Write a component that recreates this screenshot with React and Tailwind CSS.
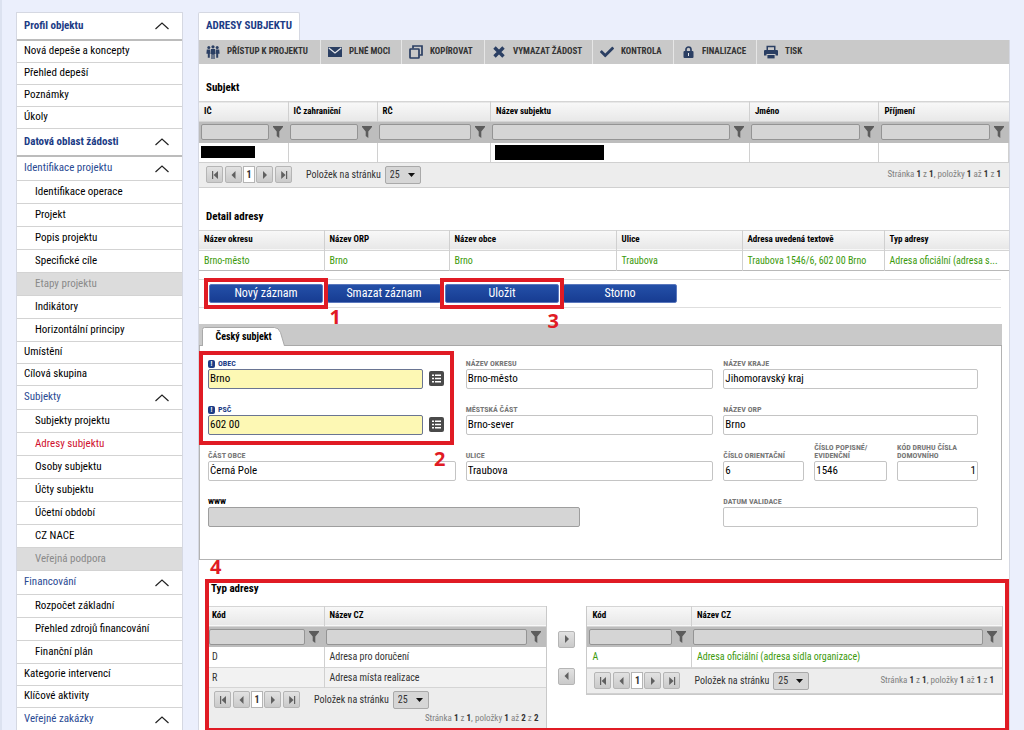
import { FaCheck } from "react-icons/fa";

const menu = [
    {
        title: "Profil objektu",
        items: ["Nová depeše a koncepty", "Přehled depeší", "Poznámky", "Úkoly"],
    },
    {
        title: "Datová oblast žádosti",
        groups: [
            {
                title: "Identifikace projektu",
                items: ["Identifikace operace", "Projekt", "Popis projektu", "Specifické cíle", "Etapy projektu", "Indikátory", "Horizontální principy"],
                after: ["Umístění", "Cílová skupina"],
            },
            {
                title: "Subjekty",
                items: ["Subjekty projektu", "Adresy subjektu", "Osoby subjektu", "Účty subjektu", "Účetní období", "CZ NACE", "Veřejná podpora"],
            },
            {
                title: "Financování",
                items: ["Rozpočet základní", "Přehled zdrojů financování", "Finanční plán"],
                after: ["Kategorie intervencí", "Klíčové aktivity"],
            },
            { title: "Veřejné zakázky", items: [] },
        ],
    },
];

const disabledItems = ["Etapy projektu", "Veřejná podpora"];
const activeItem = "Adresy subjektu";

/* Icons */
function Chevron() {
    return (
        <svg className="w-[14px] h-2" viewBox="0 0 14 8" fill="none" stroke="#222" strokeWidth="1.2">
            <path d="M0.5 7 L7 1 L13.5 7" />
        </svg>
    );
}

function People() {
    return (
        <svg className="w-[14px] h-[14px]" viewBox="0 0 14 14" fill="#2b3f63">
            <circle cx="2.8" cy="2.6" r="1.5" />
            <circle cx="11.2" cy="2.6" r="1.5" />
            <circle cx="7" cy="1.8" r="1.6" />
            <path d="M0.8 4.6h3.4v4.2h-0.4v4h-2v-4H0.4z" />
            <path d="M9.8 4.6h3.4l0.4 4.2h-1.4v4h-2v-4h-0.4z" />
            <path d="M5 4h4l0.5 5h-0.9v5h-1.2v-4.4h-0.8V14H5.4V9h-0.9z" />
        </svg>
    );
}

function Envelope() {
    return (
        <svg className="w-[14px] h-[10px]" viewBox="0 0 14 10">
            <rect width="14" height="10" rx="0.6" fill="#2b3f63" />
            <path d="M0.8 1 L7 6 L13.2 1" fill="none" stroke="#e4e6ea" strokeWidth="1.2" />
        </svg>
    );
}

function Copy() {
    return (
        <svg className="w-[14px] h-[14px]" viewBox="0 0 14 14" fill="none" stroke="#2b3f63" strokeWidth="1.7">
            <rect x="1" y="4" width="9" height="9" rx="0.5" />
            <path d="M4 3.5V1h9v9h-2.5" />
        </svg>
    );
}

function Cross() {
    return (
        <svg className="w-3 h-3" viewBox="0 0 12 12" fill="none" stroke="#2b3f63" strokeWidth="3.4">
            <path d="M1.5 1.5l9 9M10.5 1.5l-9 9" />
        </svg>
    );
}

function Lock() {
    return (
        <svg className="w-[11px] h-3" viewBox="0 0 11 12">
            <path d="M3 6V3.5a2.5 2.5 0 0 1 5 0V6" fill="none" stroke="#2b3f63" strokeWidth="1.7" />
            <rect x="0.5" y="5" width="10" height="7" rx="1" fill="#2b3f63" />
            <path d="M5 7h1v3H5z" fill="#e4e6ea" />
        </svg>
    );
}

function Printer() {
    return (
        <svg className="w-[14px] h-[14px]" viewBox="0 0 14 14" fill="#2b3f63">
            <path d="M2.5 0.8h9V5H10V2.2H4V5H2.5z" />
            <path d="M1 5h12q1 0 1 1v4.5h-2.5V9h-9v1.5H0V6q0-1 1-1z" />
            <path d="M3.4 10h7.2v3.4H3.4z" />
        </svg>
    );
}

function Funnel() {
    return (
        <svg className="w-[10px] h-3 shrink-0" viewBox="0 0 10 12" fill="#5c5c5c">
            <path d="M0 0h10v1L6.3 5.5V12L3.7 10V5.5L0 1z" />
        </svg>
    );
}

const pagerIcons = {
    first: "M2 1v8h1.2V1zM8 1v8L3.6 5z",
    prev: "M6.5 1v8L2.5 5z",
    next: "M3 1v8l4-4z",
    last: "M7 1v8h1.2V1zM2.2 1v8L6.6 5z",
};

function PagerButton({ icon, label }) {
    return (
        <button aria-label={label} className="flex h-[17px] w-[17px] items-center justify-center rounded-xs border border-[#b5b5b5] bg-linear-to-b from-[#e2e2e2] to-[#cacaca]">
            <svg className="w-[10px] h-[10px]" viewBox="0 0 10 10" fill="#606060">
                <path d={pagerIcons[icon]} />
            </svg>
        </button>
    );
}

/* Sidebar */
function Leaf({ text, nested }) {
    let look = "text-black";
    if (disabledItems.includes(text)) look = "bg-[#dcdcdc] text-[#8a8a8a]";
    if (text === activeItem) look = "text-[#d0102e]";
    return (
        <li>
            <a href="#" className={`flex items-center border-b border-[#d3d3d3] ${nested ? "h-[23px] pl-[18px]" : "h-[22px] pl-[7px]"} ${look}`}>
                {text}
            </a>
        </li>
    );
}

function Sidebar() {
    return (
        <nav className="w-[167px] shrink-0 border-x border-t border-[#d5d8e2] bg-white text-[11px]">
            {menu.map((part) => (
                <section key={part.title}>
                    <button className="flex h-7 w-full items-center justify-between border-b-2 border-[#bcbcbc] pl-[7px] pr-[13px] font-bold text-[#1c3c86]">
                        {part.title}
                        <Chevron />
                    </button>
                    {part.items && <ul>{part.items.map((t) => <Leaf key={t} text={t} />)}</ul>}
                    {part.groups?.map((g) => (
                        <div key={g.title}>
                            <button className="flex h-6 w-full items-center justify-between border-b border-[#d3d3d3] pl-[7px] pr-[13px] text-[#2a4a93]">
                                {g.title}
                                <Chevron />
                            </button>
                            <ul>
                                {g.items.map((t) => <Leaf key={t} text={t} nested />)}
                                {g.after?.map((t) => <Leaf key={t} text={t} />)}
                            </ul>
                        </div>
                    ))}
                </section>
            ))}
        </nav>
    );
}

/* Toolbar */
const tools = [
    { label: "PŘÍSTUP K PROJEKTU", icon: <People />, width: "w-[122px]" },
    { label: "PLNÉ MOCI", icon: <Envelope />, width: "w-[81px]" },
    { label: "KOPÍROVAT", icon: <Copy />, width: "w-[83px]" },
    { label: "VYMAZAT ŽÁDOST", icon: <Cross />, width: "w-[108px]" },
    { label: "KONTROLA", icon: <FaCheck size={14} />, width: "w-[81px]" },
    { label: "FINALIZACE", icon: <Lock />, width: "w-[83px]" },
    { label: "TISK", icon: <Printer />, width: "w-[70px]" },
];

function Toolbar() {
    return (
        <div className="flex h-6 bg-[#c9c9c9]">
            {tools.map((tool) => (
                <button
                    key={tool.label}
                    className={`flex items-center gap-[7px] border-r border-[#e6e6e6] pl-[7px] text-[9px] font-bold whitespace-nowrap text-[#333] last:border-r-0 ${tool.width}`}
                >
                    <span className="flex w-[14px] justify-center text-[#2b3f63]">{tool.icon}</span>
                    {tool.label}
                </button>
            ))}
        </div>
    );
}

/* Tables */
function HeadRow({ columns }) {
    return (
        <tr className="h-5 border-y border-[#d5d5d5] bg-linear-to-b from-[#f8f8f8] to-[#e8e8e8]">
            {columns.map((c) => (
                <th key={c} className="border-r border-[#d0d0d0] px-[5px] text-left text-[9px] font-bold text-black last:border-r-0">
                    {c}
                </th>
            ))}
        </tr>
    );
}

function FilterRow({ columns }) {
    return (
        <tr className="h-[21px] bg-[#bdbdbd]">
            {columns.map((c) => (
                <td key={c} className="py-0 pr-[5px] pl-0.5">
                    <div className="flex items-center gap-1">
                        <input aria-label={`Filtr ${c}`} className="h-4 w-full min-w-0 rounded-xs border border-[#949494] bg-[#d5d5d5]" />
                        <Funnel />
                    </div>
                </td>
            ))}
        </tr>
    );
}

function Pager({ id, from, total, wrap }) {
    return (
        <div className={`flex items-center border-[#d0d0d0] bg-[#ededed] pl-[7px] pr-2 text-[10px] text-[#333] ${wrap ? "flex-wrap" : "h-[26px] border-y"}`}>
            <div className="flex items-center gap-0.5">
                <PagerButton icon="first" label="První stránka" />
                <PagerButton icon="prev" label="Předchozí stránka" />
                <span className="-mx-px flex h-[17px] w-3 items-center justify-center border border-[#b5b5b5] bg-white font-bold">1</span>
                <PagerButton icon="next" label="Další stránka" />
                <PagerButton icon="last" label="Poslední stránka" />
            </div>
            <label htmlFor={id} className="pr-1 pl-[14px]">Položek na stránku</label>
            <div className="relative my-[3px]">
                <select id={id} className="block h-[18px] w-9 appearance-none rounded-xs border border-[#a9a9a9] bg-[#d6d6d6] pl-1 text-[10px]">
                    <option>25</option>
                </select>
                <svg className="pointer-events-none absolute top-[7px] right-1.5 h-1 w-[7px]" viewBox="0 0 7 4" fill="#111">
                    <path d="M0 0h7L3.5 4z" />
                </svg>
            </div>
            <p className={`text-right text-[9px] text-[#808080] [&_b]:text-[#333] ${wrap ? "w-full pb-[7px] leading-3" : "ml-auto"}`}>
                Stránka <b>1</b> z <b>1</b>, položky <b>{from}</b> až <b>{total}</b> z <b>{total}</b>
            </p>
        </div>
    );
}

function Note({ children, className }) {
    return <span className={`pointer-events-none absolute font-['Open_Sans',sans-serif] text-[20px] leading-5 font-bold text-[#e01b24] ${className}`}>{children}</span>;
}

function SubjectTable() {
    const columns = ["IČ", "IČ zahraniční", "RČ", "Název subjektu", "Jméno", "Příjmení"];
    return (
        <section>
            <h2 className="px-[7px] pt-4 pb-[5px] text-[11px] leading-4 font-bold text-black">Subjekt</h2>
            <table className="w-full table-fixed border-collapse">
                <colgroup>
                    <col className="w-[11%]" />
                    <col className="w-[11%]" />
                    <col className="w-[14%]" />
                    <col className="w-[32%]" />
                    <col className="w-[16%]" />
                    <col className="w-[16%]" />
                </colgroup>
                <thead>
                    <HeadRow columns={columns} />
                    <FilterRow columns={columns} />
                </thead>
                <tbody>
                    <tr className="h-[19px] [&>td]:border-r [&>td]:border-[#d0d0d0]">
                        <td className="px-0.5"><div className="h-3 w-[54px] bg-black" /></td>
                        <td />
                        <td />
                        <td className="px-1"><div className="h-[15px] w-[109px] bg-black" /></td>
                        <td />
                        <td />
                    </tr>
                </tbody>
            </table>
            <Pager id="size-subject" from={1} total={1} />
        </section>
    );
}

function AddressTable() {
    const columns = ["Název okresu", "Název ORP", "Název obce", "Ulice", "Adresa uvedená textově", "Typ adresy"];
    const row = ["Brno-město", "Brno", "Brno", "Traubova", "Traubova 1546/6, 602 00 Brno", "Adresa oficiální (adresa s..."];
    return (
        <section>
            <h2 className="px-[7px] pt-[21px] pb-[5px] text-[11px] leading-4 font-bold text-black">Detail adresy</h2>
            <table className="w-full table-fixed border-collapse border-b border-[#b9b9b9]">
                <colgroup>
                    <col className="w-[125px]" />
                    <col className="w-[125px]" />
                    <col className="w-[167px]" />
                    <col className="w-[126px]" />
                    <col className="w-[142px]" />
                    <col />
                </colgroup>
                <thead>
                    <HeadRow columns={columns} />
                </thead>
                <tbody>
                    <tr className="h-5">
                        {row.map((cell, i) => (
                            <td key={i} className="truncate border-r border-[#d0d0d0] px-[5px] text-[10px] text-[#3c9a0c] last:border-r-0">{cell}</td>
                        ))}
                    </tr>
                </tbody>
            </table>
        </section>
    );
}

/* Buttons */
function Actions() {
    const actions = [
        { label: "Nový záznam", note: "1", at: "-bottom-6 -right-[18px]" },
        { label: "Smazat záznam" },
        { label: "Uložit", note: "3", at: "-bottom-7 right-0" },
        { label: "Storno" },
    ];
    return (
        <div className="mr-2 mt-2 flex gap-1 border-y border-[#dedede] py-1 pl-[10px]">
            {actions.map((a) => (
                <div key={a.label} className="relative">
                    <button className="block h-[19px] w-[114px] rounded-xs border border-[#5b78bd] bg-linear-to-b from-[#2450a8] to-[#173c92] text-[12px] leading-4 text-white">
                        {a.label}
                    </button>
                    {a.note && (
                        <>
                            <div className="pointer-events-none absolute -inset-x-[5px] -inset-y-[6px] z-10 border-4 border-[#e01b24]" />
                            <Note className={a.at}>{a.note}</Note>
                        </>
                    )}
                </div>
            ))}
        </div>
    );
}

/* Form */
function Field({ id, label, value, required, locked, right, className = "" }) {
    let box = "border-[#c4c4c4] bg-white";
    if (required) box = "border-[#6a7592] bg-[#fdf8b4]";
    if (locked) box = "border-[#9e9e9e] bg-[#d5d5d5]";
    let tone = "text-[#777]";
    if (required) tone = "text-[#1c3c86]";
    if (locked) tone = "text-black";
    return (
        <div className={`flex h-[46px] flex-col justify-end pb-[10px] ${className}`}>
            <label htmlFor={id} className={`flex items-center gap-[3px] text-[8px] leading-[8px] font-bold ${tone}`}>
                {required && <span className="flex h-2 w-[7px] items-center justify-center rounded-xs bg-[#1c3c86] text-[7px] text-white">!</span>}
                {label}
            </label>
            <div className="mt-px flex items-center gap-1.5">
                <input id={id} defaultValue={value} readOnly={locked} className={`h-5 w-full min-w-0 rounded-xs border px-px text-[11px] text-black ${right ? "text-right" : ""} ${box}`} />
                {required && (
                    <button type="button" aria-label={`Vybrat ${label}`} className="mr-3 flex h-[15px] w-[15px] shrink-0 items-center justify-center rounded-xs bg-[#4a4a4a]">
                        <svg className="w-[9px] h-[9px]" viewBox="0 0 9 9" fill="#fff">
                            <path d="M0 0.5h2v1.5H0zM3 0.5h6v1.5H3zM0 3.8h2v1.5H0zM3 3.8h6v1.5H3zM0 7h2v1.5H0zM3 7h6v1.5H3z" />
                        </svg>
                    </button>
                )}
            </div>
        </div>
    );
}

function AddressForm() {
    return (
        <section className="mr-[7px] mt-4">
            <div className="h-[22px] border-b border-[#a9a9a9] bg-[#c9c9c9] pl-[3px] pt-[3px]">
                <button className="relative z-0 flex h-[19px] w-[83px] items-center justify-center text-[10px] font-bold text-black">
                    <svg className="absolute inset-0 -z-10 h-full w-full" viewBox="0 0 83 19" preserveAspectRatio="none" fill="#fff" stroke="#a9a9a9">
                        <path d="M0.5 19V2.5q0-2 2-2h70q4 0 6 5L82.5 19" />
                    </svg>
                    Český subjekt
                </button>
            </div>
            <form className="relative grid grid-cols-[248fr_248fr_255fr] gap-x-[10px] border-x border-b border-[#b3b3b3] pt-[7px] pr-[23px] pb-[22px] pl-2">
                <Field id="obec" label="OBEC" value="Brno" required />
                <Field id="okres" label="NÁZEV OKRESU" value="Brno-město" />
                <Field id="kraj" label="NÁZEV KRAJE" value="Jihomoravský kraj" />
                <Field id="psc" label="PSČ" value="602 00" required />
                <Field id="cast" label="MĚSTSKÁ ČÁST" value="Brno-sever" />
                <Field id="orp" label="NÁZEV ORP" value="Brno" />
                <Field id="cast-obce" label="ČÁST OBCE" value="Černá Pole" />
                <Field id="ulice" label="ULICE" value="Traubova" />
                <div className="grid grid-cols-[81fr_73fr_81fr] gap-x-[10px]">
                    <Field id="orientacni" label="ČÍSLO ORIENTAČNÍ" value="6" />
                    <Field id="popisne" label="ČÍSLO POPISNÉ/ EVIDENČNÍ" value="1546" />
                    <Field id="druh" label="KÓD DRUHU ČÍSLA DOMOVNÍHO" value="1" right />
                </div>
                <Field id="www" label="WWW" locked className="col-span-2 w-[372px] max-w-full" />
                <Field id="datum" label="DATUM VALIDACE" />
                <div className="pointer-events-none absolute top-[5px] -left-px h-[94px] w-[255px] border-4 border-[#e01b24]" />
                <Note className="top-[103px] left-[234px]">2</Note>
            </form>
        </section>
    );
}

/* Address types */
function TypeTable({ id, rows, total, wrap, green, cols }) {
    const columns = ["Kód", "Název CZ"];
    return (
        <div className="border-x border-b border-[#c9c9c9]">
            <table className="w-full table-fixed border-collapse">
                <colgroup>
                    <col className={cols} />
                    <col />
                </colgroup>
                <thead>
                    <HeadRow columns={columns} />
                    <FilterRow columns={columns} />
                </thead>
                <tbody>
                    {rows.map((row) => (
                        <tr key={row[0]} className="h-5 border-b border-[#d5d5d5] even:bg-[#f2f2f2]">
                            {row.map((cell) => (
                                <td key={cell} className={`border-r border-[#d0d0d0] px-[5px] text-[10px] last:border-r-0 ${green ? "text-[#3c9a0c]" : "text-[#333]"}`}>{cell}</td>
                            ))}
                        </tr>
                    ))}
                </tbody>
            </table>
            <Pager id={id} from={1} total={total} wrap={wrap} />
        </div>
    );
}

function AddressTypes() {
    return (
        <section className="relative mt-[19px] mr-1.5 ml-[7px]">
            <Note className="-top-[22px] left-1">4</Note>
            <h2 className="px-[5px] pt-1 pb-[11px] text-[11px] leading-3 font-bold text-black">Typ adresy</h2>
            <div className="grid grid-cols-[341fr_39px_416fr] items-start">
                <TypeTable id="size-left" rows={[["D", "Adresa pro doručení"], ["R", "Adresa místa realizace"]]} total={2} wrap cols="w-[117px]" />
                <div className="flex flex-col items-center gap-5 pt-[25px]">
                    <PagerButton icon="next" label="Přidat" />
                    <PagerButton icon="prev" label="Odebrat" />
                </div>
                <TypeTable id="size-right" rows={[["A", "Adresa oficiální (adresa sídla organizace)"]]} total={1} green cols="w-[104px]" />
            </div>
            <div className="pointer-events-none absolute inset-y-0 -right-1.5 -left-px border-4 border-[#e01b24]" />
        </section>
    );
}

export default function App() {
    return (
        <div className="flex h-screen items-start gap-[15px] overflow-hidden border-l-2 border-[#dce2f0] bg-[#ebeffc] pt-3 pr-[14px] pl-[14px] font-['Roboto_Condensed',Roboto,sans-serif]">
            <Sidebar />
            <main className="min-w-0 flex-1">
                <h1 className="flex h-7 w-[102px] items-center justify-center rounded-t-xs border-x border-t border-[#d5d8e2] bg-white text-[11px] font-bold text-[#1c3c86]">
                    ADRESY SUBJEKTU
                </h1>
                <div className="border-x border-[#d5d8e2] bg-white">
                    <Toolbar />
                    <SubjectTable />
                    <AddressTable />
                    <Actions />
                    <AddressForm />
                    <AddressTypes />
                </div>
            </main>
        </div>
    );
}
